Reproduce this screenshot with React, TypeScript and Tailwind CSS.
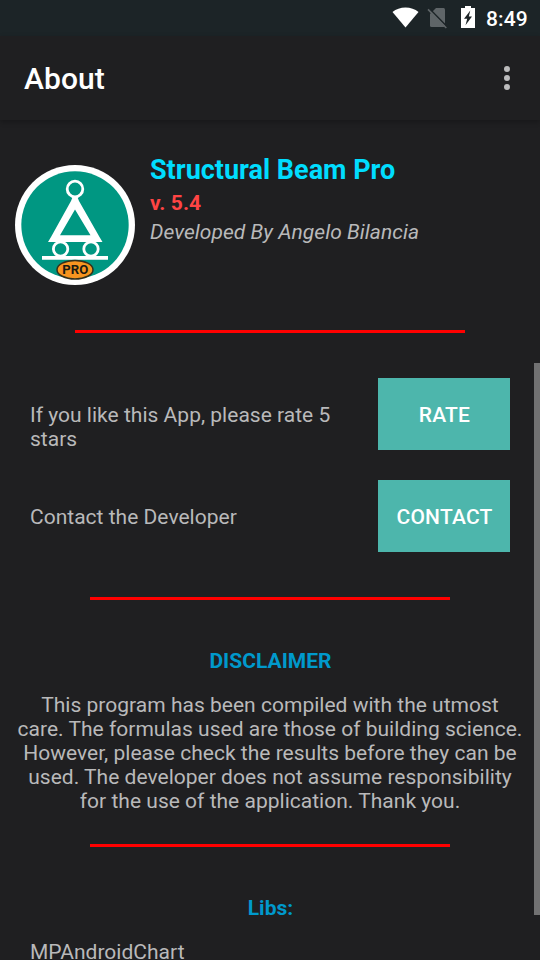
import type { ReactNode } from "react";

function StatusBar() {
  return (
    <div className="flex h-9 shrink-0 items-start bg-[#1c2427] pl-[392px] text-white">
      <svg className="mt-[7px] h-[21px] w-[27px]" viewBox="0 0 27 21" fill="currentColor">
        <path d="M13.5 20.6 0.5 4.9C4 2 8.5 0.4 13.5 0.4S23 2 26.5 4.9Z" />
      </svg>
      <svg className="ml-2 mt-[7px] h-[22px] w-5" viewBox="0 0 20 22">
        <path d="M9 1H16.6Q18 1 18 2.5V18.5Q18 20 16.6 20H4.5Q3 20 3 18.5V7Z" fill="#5f6568" />
        <path d="M3 2.2 20 19.6" stroke="#1c2427" strokeWidth="1.6" />
        <path d="M1 2.4 19.3 21" stroke="#5f6568" strokeWidth="1.6" />
      </svg>
      <svg className="ml-[14px] mt-[6px] h-[22px] w-[14px]" viewBox="0 0 14 22">
        <path d="M4 0h6v2h4v20H0V2h4Z" fill="white" />
        <path d="M9.3 4.5 3 12.7h3.2L4.5 19.3 11 10.4H7.8Z" fill="#1c2427" />
      </svg>
      <span className="ml-[11px] mt-[7px] text-[21px] font-medium leading-6 tracking-[0.1px]">8:49</span>
    </div>
  );
}

function AppBar() {
  return (
    <header className="flex h-[84px] shrink-0 items-center justify-between bg-[#1f1f21] pl-6 pr-[30px] shadow-[0_2px_5px_rgba(0,0,0,0.25)]">
      <h1 className="pt-[2px] text-[30px] font-medium leading-9 tracking-[0.1px] text-white">About</h1>
      <div className="flex flex-col gap-[3px]">
        <i className="size-[6px] rounded-full bg-[#bcbcbd]" />
        <i className="size-[6px] rounded-full bg-[#bcbcbd]" />
        <i className="size-[6px] rounded-full bg-[#bcbcbd]" />
      </div>
    </header>
  );
}

function Logo() {
  return (
    <svg className="mt-[11px] size-[120px] shrink-0" viewBox="0 0 120 120">
      <circle cx="60" cy="60" r="60" fill="white" />
      <circle cx="60" cy="60" r="53.7" fill="#009782" />
      <g fill="none" stroke="white">
        <circle cx="60" cy="24" r="7.8" strokeWidth="2.8" />
        <circle cx="45.6" cy="84" r="7.2" strokeWidth="2.8" />
        <circle cx="76" cy="84" r="7.2" strokeWidth="2.8" />
        <path d="M27 92.8H93" strokeWidth="3.8" />
      </g>
      <path
        fillRule="evenodd"
        fill="white"
        d="M58 31h4L64 36 84.5 72 87.5 77H33L36 72 56 36ZM60 44.5 45 70.3H75.5Z"
      />
      <ellipse cx="60" cy="104.7" rx="18" ry="9.3" fill="#f79420" stroke="#33301c" strokeWidth="1.5" />
      <text
        x="60.3"
        y="109.3"
        textAnchor="middle"
        textLength="26"
        lengthAdjust="spacingAndGlyphs"
        className="text-[13px] font-bold"
        fill="#1c1a12"
      >
        PRO
      </text>
    </svg>
  );
}

function ActionRow({ label, button }: { label: string; button: string }) {
  return (
    <div className="flex h-[72px] items-start justify-between">
      <p className="mt-[25px] w-[318px]">{label}</p>
      <button className="h-[72px] w-[132px] bg-[#4db6ac] pl-px pt-[2px] font-medium tracking-[0.2px] text-white">
        {button}
      </button>
    </div>
  );
}

function Heading({ children }: { children: ReactNode }) {
  return <h2 className="pl-px text-center font-bold text-[#0099cc]">{children}</h2>;
}

export default function App() {
  return (
    <div className="relative flex h-[960px] w-[540px] flex-col overflow-hidden bg-[#1f1f21] font-[Roboto,sans-serif] text-[21px] leading-6 tracking-[0.015px] text-[#b9b9ba]">
      <StatusBar />
      <AppBar />
      <main className="flex flex-col">
        <section className="flex gap-[15px] pl-[15px] pt-[34px]">
          <Logo />
          <div>
            <h2 className="text-[27px] font-bold leading-8 tracking-normal text-[#00ddff]">
              Structural Beam Pro
            </h2>
            <p className="mt-[5px] font-bold tracking-[0.1px] text-[#ff4444]">v. 5.4</p>
            <p className="mt-[5px] italic tracking-[0.05px]">Developed By Angelo Bilancia</p>
          </div>
        </section>
        <div className="mx-[75px] mt-[45px] h-[3px] bg-[#ff0000]" />
        <section className="mt-[45px] flex flex-col gap-[30px] px-[30px]">
          <ActionRow label="If you like this App, please rate 5 stars" button="RATE" />
          <ActionRow label="Contact the Developer" button="CONTACT" />
        </section>
        <div className="mx-[90px] mt-[45px] h-[3px] bg-[#ff0000]" />
        <section className="mt-[49px]">
          <Heading>DISCLAIMER</Heading>
          <p className="mt-5 px-[15px] text-center">
            This program has been compiled with the utmost
            <br />
            care. The formulas used are those of building science.
            <br />
            However, please check the results before they can be
            <br />
            used. The developer does not assume responsibility
            <br />
            for the use of the application. Thank you.
          </p>
        </section>
        <div className="mx-[90px] mt-[31px] h-[3px] bg-[#ff0000]" />
        <section className="mt-[49px]">
          <Heading>Libs:</Heading>
          <p className="mt-5 pl-[30px]">MPAndroidChart</p>
        </section>
      </main>
      <div className="absolute right-0 top-[363px] h-[552px] w-[6px] bg-[#717172]" />
    </div>
  );
}
